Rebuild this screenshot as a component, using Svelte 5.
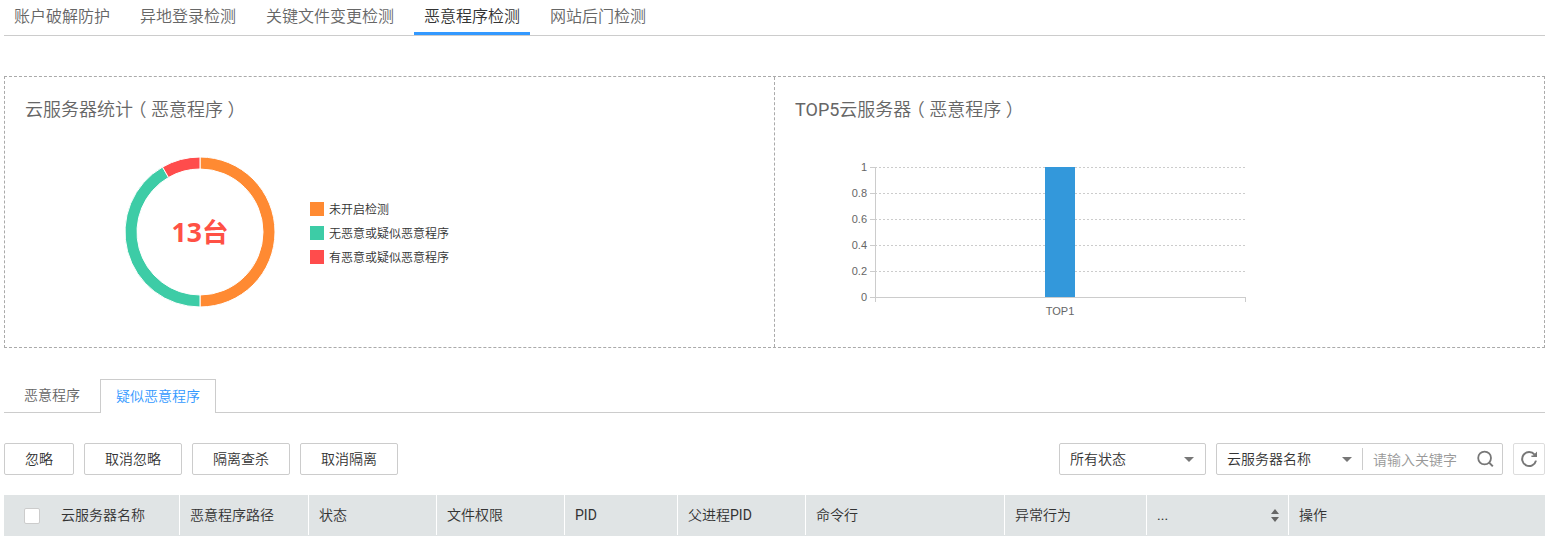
<script>
  const topTabs = ['账户破解防护', '异地登录检测', '关键文件变更检测', '恶意程序检测', '网站后门检测'];
  const activeTop = 3;
  const legend = [
    { label: '未开启检测', color: '#ff8a32' },
    { label: '无恶意或疑似恶意程序', color: '#3dcca6' },
    { label: '有恶意或疑似恶意程序', color: '#ff4c4c' }
  ];
  const slices = [
    { from: 0, to: 180, color: '#ff8a32' },
    { from: 180, to: 330, color: '#3dcca6' },
    { from: 330, to: 360, color: '#ff4c4c' }
  ];
  const ticks = ['1', '0.8', '0.6', '0.4', '0.2', '0'];
  const actions = ['忽略', '取消忽略', '隔离查杀', '取消隔离'];
  const columns = [
    { label: '云服务器名称', width: 176, check: true },
    { label: '恶意程序路径', width: 129 },
    { label: '状态', width: 128 },
    { label: '文件权限', width: 128 },
    { label: '', latin: 'PID', width: 113 },
    { label: '父进程', latin: 'PID', width: 128 },
    { label: '命令行', width: 199 },
    { label: '异常行为', width: 142 },
    { label: '', latin: '...', width: 142, sort: true },
    { label: '操作', width: 256 }
  ];

  function point(r, deg) {
    const a = (deg * Math.PI) / 180;
    return `${(76 + r * Math.sin(a)).toFixed(3)} ${(76 - r * Math.cos(a)).toFixed(3)}`;
  }
  function ring({ from, to }) {
    return `M${point(75, from)}A75 75 0 0 1 ${point(75, to)}L${point(63, to)}A63 63 0 0 0 ${point(63, from)}Z`;
  }
</script>

<div class="page">
  <nav class="top-tabs">
    {#each topTabs as tab, i}
      <span class="top-tab" class:active={i === activeTop}>{tab}</span>
    {/each}
  </nav>

  <section class="panels">
    <div class="panel first">
      <h2>云服务器统计<span class="paren">（</span>恶意程序<span class="paren">）</span></h2>
      <div class="stats">
        <svg class="donut" width="152" height="152" viewBox="0 0 152 152">
          {#each slices as s}
            <path d={ring(s)} fill={s.color} stroke="#fff" stroke-width="1" />
          {/each}
          <text x="76" y="85.5" text-anchor="middle">13台</text>
        </svg>
        <ul class="legend">
          {#each legend as item}
            <li><i style="background:{item.color}"></i><span>{item.label}</span></li>
          {/each}
        </ul>
      </div>
    </div>
    <div class="panel">
      <h2><span class="latin">TOP5</span>云服务器<span class="paren">（</span>恶意程序<span class="paren">）</span></h2>
      <svg class="bars" width="420" height="170" viewBox="0 0 420 170">
        {#each ticks as t, i}
          <text x="27" y={14 + i * 26} text-anchor="end">{t}</text>
          <path d="M30 {10.5 + i * 26}h5" stroke="#ccc" />
          {#if i < 5}
            <path d="M35 {10.5 + i * 26}h370" stroke="#ccc" stroke-dasharray="2 2" class="grid" />
          {/if}
        {/each}
        <path d="M35.5 10v135M35 140.5h371M405.5 140v5" stroke="#ccc" fill="none" />
        <rect x="205" y="10" width="30" height="130" fill="#3398db" />
        <text x="220" y="158" text-anchor="middle">TOP1</text>
      </svg>
    </div>
  </section>

  <nav class="sub-tabs">
    <span class="sub-tab">恶意程序</span>
    <span class="sub-tab current">疑似恶意程序</span>
  </nav>

  <div class="toolbar">
    {#each actions as a}
      <button class="btn">{a}</button>
    {/each}
    <div class="filters">
      <div class="select"><span>所有状态</span><i class="caret"></i></div>
      <div class="search">
        <div class="field"><span>云服务器名称</span><i class="caret"></i></div>
        <span class="hint">请输入关键字</span>
        <svg width="18" height="18" viewBox="0 0 18 18" fill="none" stroke="#777" stroke-width="1.8">
          <circle cx="7.6" cy="8" r="6.4" /><path d="M12.2 12.6l3.6 3.8" stroke-width="2" />
        </svg>
      </div>
      <button class="refresh" aria-label="刷新">
        <svg width="18" height="18" viewBox="0 0 18 18" fill="none" stroke="#777" stroke-width="2">
          <path d="M14.6 4.6A7 7 0 1 0 16 10.6" /><path d="M17 1.4v5.6h-5.6v-1.6h1.8z" fill="#777" stroke="none" />
        </svg>
      </button>
    </div>
  </div>

  <div class="thead">
    {#each columns as c}
      <div class="cell" class:with-check={c.check} style="width:{c.width}px">
        {#if c.check}<i class="checkbox"></i>{/if}
        <span>{c.label}{#if c.latin}<span class="latin">{c.latin}</span>{/if}</span>
        {#if c.sort}
          <svg class="sort" width="8" height="13" viewBox="0 0 8 13" fill="#666">
            <path d="M0 5L4 0l4 5zM0 8h8l-4 5z" />
          </svg>
        {/if}
      </div>
    {/each}
  </div>
</div>

<style>
  :global(body) { margin: 0; background: #fff; overflow: hidden; }
  .page {
    width: 1541px;
    height: 536px;
    margin-left: 4px;
    color: #333;
    font: 350 14px/20px Roboto, "Noto Sans CJK SC", sans-serif;
    overflow: hidden;
  }
  .latin { font-weight: 400; }
  .top-tabs {
    display: flex;
    gap: 10px;
    height: 35px;
    border-bottom: 1px solid #ccc;
    font-size: 16px;
    line-height: 34px;
    color: #666;
  }
  .top-tab { box-sizing: border-box; height: 35px; padding: 0 10px; white-space: nowrap; }
  .top-tab.active { border-bottom: 3px solid #39f; color: #333; }
  .panels {
    box-sizing: border-box;
    display: flex;
    height: 272px;
    margin-top: 40px;
    border: 1px dashed #aaa;
  }
  .panel { box-sizing: border-box; flex: 1; }
  .panel.first { flex: 0 0 770px; border-right: 1px dashed #aaa; }
  h2 {
    height: 26px;
    margin: 20px 0 0 20px;
    font-size: 18px;
    line-height: 26px;
    font-weight: 350;
    color: #666;
  }
  .paren { display: inline-block; width: 18px; text-align: center; font-feature-settings: "halt"; }
  .stats { display: flex; align-items: center; margin: 33px 0 0 119px; }
  .donut { display: block; }
  .donut text { font: 700 26.5px "Open Sans", "Noto Sans CJK SC", sans-serif; fill: #ff5145; }
  .legend { margin: 1px 0 0 34px; padding: 0; list-style: none; font-size: 12px; line-height: 24px; }
  .legend li { display: flex; align-items: center; height: 24px; }
  .legend i { width: 14px; height: 14px; margin-right: 5px; }
  .legend span { padding-top: 2px; }
  .bars { display: block; margin: 34px 0 0 65px; }
  .bars text { font: 11px "Liberation Sans", Arial, sans-serif; fill: #666; }
  .grid { shape-rendering: crispEdges; }
  .sub-tabs {
    display: flex;
    box-sizing: border-box;
    height: 34px;
    margin-top: 31px;
    color: #666;
    line-height: 32px;
    box-shadow: inset 0 -1px #ccc;
  }
  .sub-tab { padding: 0 20px; }
  .sub-tab.current {
    box-sizing: border-box;
    height: 34px;
    padding: 0 15px;
    border: 1px solid #ccc;
    border-bottom: 0;
    background: #fff;
    color: #39f;
  }
  .toolbar { display: flex; gap: 10px; height: 32px; margin-top: 30px; }
  .btn, .select, .search, .refresh {
    box-sizing: border-box;
    height: 32px;
    border: 1px solid #ccc;
    border-radius: 2px;
    background: #fff;
    color: #333;
    font: inherit;
  }
  .btn { padding: 0 20px; line-height: 30px; }
  .filters { display: flex; gap: 10px; margin-left: auto; }
  .select, .search, .field { display: flex; align-items: center; }
  .select { justify-content: space-between; width: 147px; padding: 0 11px 0 10px; }
  .search { width: 287px; padding-left: 10px; }
  .field {
    box-sizing: border-box;
    justify-content: space-between;
    width: 136px;
    height: 22px;
    padding-right: 10px;
    border-right: 1px solid #ccc;
  }
  .caret { border: 5px solid transparent; border-top-color: #777; border-bottom: 0; }
  .hint { width: 104px; margin: 2px 0 0 10px; color: #999; }
  .search svg { display: block; }
  .refresh { display: flex; align-items: center; justify-content: center; width: 32px; padding: 0; border-color: #ddd; }
  .thead { display: flex; height: 41px; margin-top: 20px; background: #e0e4e5; }
  .cell {
    box-sizing: border-box;
    display: flex;
    align-items: center;
    height: 40px;
    padding: 0 10px;
    border-right: 1px solid #fff;
    white-space: nowrap;
  }
  .cell:last-child { border-right: 0; }
  .with-check { padding-left: 20px; }
  .checkbox {
    box-sizing: border-box;
    width: 16px;
    height: 16px;
    margin: 2px 21px 0 0;
    border: 1px solid #ccc;
    border-radius: 2px;
    background: #fff;
  }
  .sort { margin: 1px -1px 0 auto; }
</style>
